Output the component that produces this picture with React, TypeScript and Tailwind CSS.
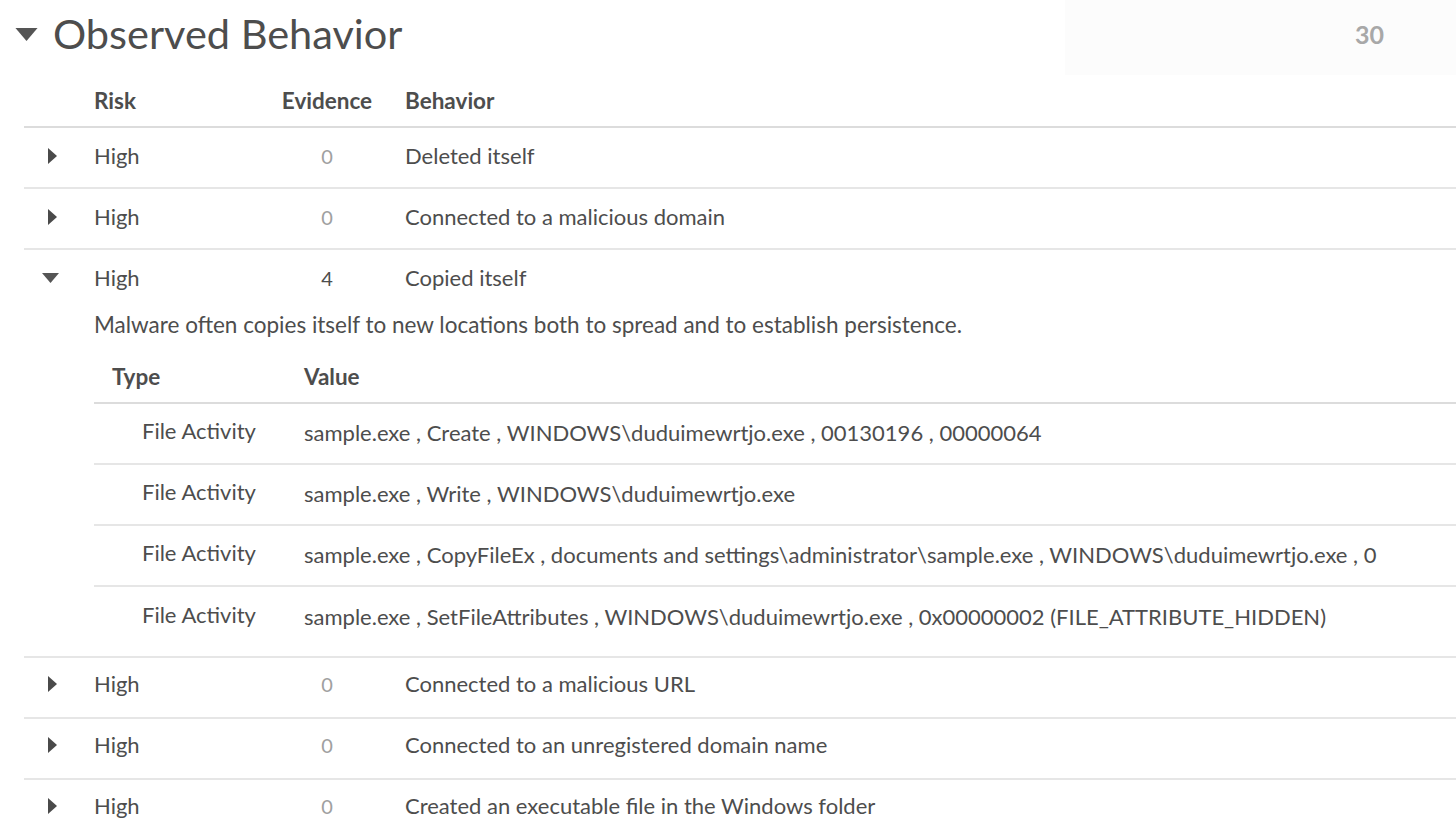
import React from "react";

const font = { fontFamily: "Lato, 'Noto Sans', sans-serif" };

function Right() {
  return (
    <svg width="11" height="18" viewBox="0 0 11 18" className="block">
      <path d="M1 1 L10 9 L1 17 Z" fill="#4a4a4a" />
    </svg>
  );
}
function Down({ w = 17, h = 10 }: { w?: number; h?: number }) {
  return (
    <svg width={w} height={h} viewBox="0 0 17 10" className="block">
      <path d="M0 0 L17 0 L8.5 10 Z" fill="#555" />
    </svg>
  );
}

type Row = { ev: string; text: string; open?: boolean };

function BehaviorRow({ r, last, after }: { r: Row; last?: boolean; after?: boolean }) {
  return (
    <div className={last ? "" : "border-b-2 border-[#e6e6e6]"}>
      <div className={"flex items-center h-[59px] text-[22px] text-[#4d4d4d] " + (after ? "pb-[8px]" : "pb-[4px]")}>
        <div className="w-[70px] flex">
          {r.open ? <div className="pl-[18px] pt-[1px]"><Down /></div> : <div className="pl-[23px]"><Right /></div>}
        </div>
        <div className="w-[187px]">High</div>
        <div className={"w-[92px] text-center text-[20px] " + (r.ev === "0" ? "text-[#a0a0a0]" : "text-[#4d4d4d]")}>{r.ev}</div>
        <div className="pl-[32px]">{r.text}</div>
      </div>
      {r.open && (
        <div className="pl-[70px] pb-[8px]">
          <div className="text-[22.5px] text-[#4d4d4d] h-[36px] leading-[36px] -mt-[2px]">
            Malware often copies itself to new locations both to spread and to establish persistence.
          </div>
          <div className="border-b-2 border-[#dcdcdc] flex items-center h-[61px] pt-[8px] text-[22.5px] font-bold text-[#4d4d4d]">
            <div className="w-[210px] pl-[18px]">Type</div>
            <div>Value</div>
          </div>
          {[
            "sample.exe , Create , WINDOWS\\duduimewrtjo.exe , 00130196 , 00000064",
            "sample.exe , Write , WINDOWS\\duduimewrtjo.exe",
            "sample.exe , CopyFileEx , documents and settings\\administrator\\sample.exe , WINDOWS\\duduimewrtjo.exe , 0",
            "sample.exe , SetFileAttributes , WINDOWS\\duduimewrtjo.exe , 0x00000002 (FILE_ATTRIBUTE_HIDDEN)",
          ].map((v, i) => (
            <div key={i} className={"flex items-center h-[61px] pb-[2px] text-[22px] text-[#4d4d4d] " + (i < 3 ? "border-b-2 border-[#e6e6e6]" : "")}>
              <div className="w-[210px] pl-[48px] -mt-[4px]">File Activity</div>
              <div>{v}</div>
            </div>
          ))}
        </div>
      )}
    </div>
  );
}

export default function App() {
  const rows: Row[] = [
    { ev: "0", text: "Deleted itself" },
    { ev: "0", text: "Connected to a malicious domain" },
    { ev: "4", text: "Copied itself", open: true },
    { ev: "0", text: "Connected to a malicious URL" },
    { ev: "0", text: "Connected to an unregistered domain name" },
    { ev: "0", text: "Created an executable file in the Windows folder" },
  ];
  return (
    <div className="w-[1456px] h-[836px] bg-white overflow-hidden" style={font}>
      <div className="flex h-[75px]">
        <div className="flex items-start flex-1 pl-[15px] pt-[11px]">
          <div className="pt-[17px]"><Down w={23} h={13} /></div>
          <span className="ml-[15px] text-[41.5px] text-[#4d4d4d] leading-[44px]">Observed Behavior</span>
        </div>
        <div className="w-[391px] bg-[#fcfcfc] flex items-center justify-end pr-[72px] text-[25px] font-bold text-[#a8a8a8] pb-[6px]">
          30
        </div>
      </div>
      <div className="ml-[24px]">
        <div className="flex items-center h-[53px] text-[22.5px] font-bold text-[#4d4d4d] border-b-2 border-[#dcdcdc]">
          <div className="w-[70px]" />
          <div className="w-[187px]">Risk</div>
          <div className="w-[92px] flex justify-center whitespace-nowrap">Evidence</div>
          <div className="pl-[32px]">Behavior</div>
        </div>
        {rows.map((r, i) => (
          <BehaviorRow key={i} r={r} last={i === rows.length - 1} after={i > 2} />
        ))}
      </div>
    </div>
  );
}
